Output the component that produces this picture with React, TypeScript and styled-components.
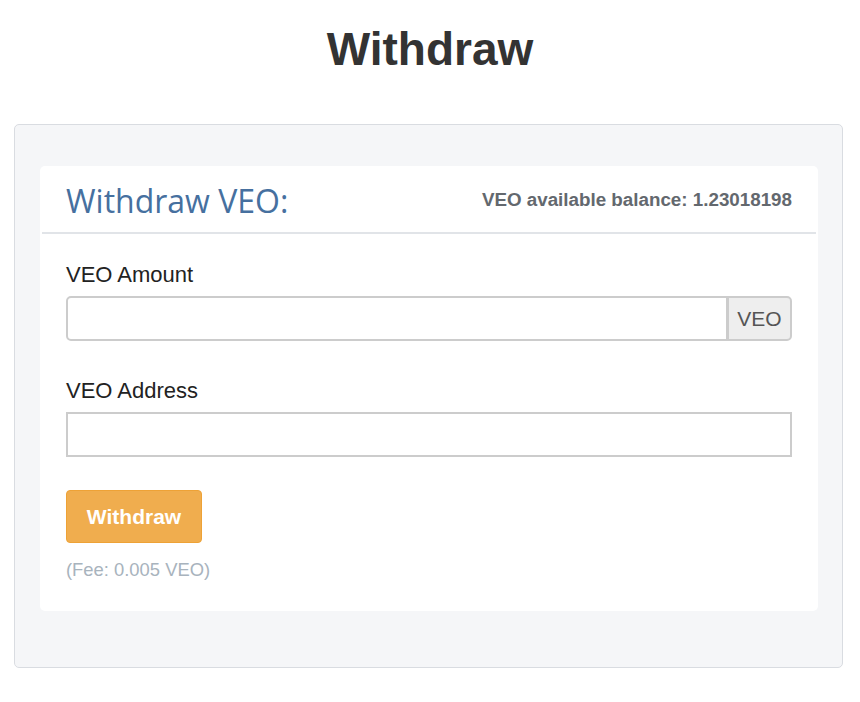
import React from "react";
import styled, { createGlobalStyle } from "styled-components";

const GlobalStyle = createGlobalStyle`
	body {
		margin: 0;
		background: #ffffff;
		font-family: "Liberation Sans", Arial, sans-serif;
		color: #222222;
	}
`;

const Page = styled.div`
	width: 860px;
	padding-bottom: 30px;
`;

const PageTitle = styled.h1`
	margin: 0;
	padding: 21px 0 0;
	height: 124px;
	box-sizing: border-box;
	text-align: center;
	font-size: 46px;
	line-height: 56px;
	font-weight: 700;
	color: #333333;
`;

const Panel = styled.div`
	margin: 0 17px 0 14px;
	padding: 41px 24px 56px 25px;
	background: #f5f6f8;
	border: 1px solid #d9dce1;
	border-radius: 5px;
`;

const Card = styled.div`
	background: #ffffff;
	border-radius: 5px;
`;

const CardHeader = styled.div`
	display: flex;
	align-items: center;
	justify-content: space-between;
	height: 66px;
	padding: 0 26px;
	margin: 0 2px;
	border-bottom: 2px solid #e1e4e8;
`;

const CardTitle = styled.h2`
	margin: 2px 0 0 -2px;
	font-family: "Open Sans", sans-serif;
	font-size: 32px;
	font-weight: 400;
	color: #46709f;
`;

const Balance = styled.div`
	margin: 2px -2px 0 0;
	font-size: 18.8px;
	font-weight: 700;
	color: #63686e;
`;

const CardBody = styled.div`
	padding: 24px 26px 29px;
`;

const Field = styled.div<{ $gap?: number }>`
	margin-bottom: ${(p) => p.$gap ?? 33}px;
`;

const Label = styled.label`
	display: block;
	padding-top: 2px;
	margin-bottom: 6px;
	font-size: 22px;
	line-height: 30px;
	color: #222222;
`;

const InputGroup = styled.div`
	display: flex;
	height: 45px;
`;

const TextInput = styled.input<{ $square?: boolean; $joined?: boolean }>`
	flex: 1;
	min-width: 0;
	box-sizing: border-box;
	height: 45px;
	margin: 0;
	padding: 0 12px;
	border: 2px solid #cccccc;
	border-radius: ${(p) => (p.$square ? "0" : p.$joined ? "5px 0 0 5px" : "5px")};
	background: #ffffff;
	font-size: 20px;
	outline: none;
`;

const Addon = styled.span`
	display: flex;
	align-items: center;
	justify-content: center;
	box-sizing: border-box;
	width: 64px;
	height: 45px;
	border: 2px solid #cccccc;
	border-left: 1px solid #cccccc;
	border-radius: 0 5px 5px 0;
	background: #eeeeee;
	font-size: 21px;
	color: #555555;
`;

const WithdrawButton = styled.button`
	display: block;
	box-sizing: border-box;
	width: 136px;
	height: 53px;
	padding: 0;
	border: 1px solid #eea236;
	border-radius: 4px;
	background: #f0ad4e;
	color: #ffffff;
	font-family: "Liberation Sans", Arial, sans-serif;
	font-size: 21px;
	font-weight: 700;
	cursor: pointer;
`;

const Fee = styled.div`
	margin-top: 15px;
	font-size: 18.4px;
	line-height: 24px;
	color: #a8b3bd;
`;

const App: React.FC = () => {
	return (
		<Page>
			<GlobalStyle />
			<PageTitle>Withdraw</PageTitle>
			<Panel>
				<Card>
					<CardHeader>
						<CardTitle>Withdraw VEO:</CardTitle>
						<Balance>VEO available balance: 1.23018198</Balance>
					</CardHeader>
					<CardBody>
						<Field>
							<Label>VEO Amount</Label>
							<InputGroup>
								<TextInput $joined />
								<Addon>VEO</Addon>
							</InputGroup>
						</Field>
						<Field>
							<Label>VEO Address</Label>
							<TextInput $square style={{ width: "100%" }} />
						</Field>
						<WithdrawButton>Withdraw</WithdrawButton>
						<Fee>(Fee: 0.005 VEO)</Fee>
					</CardBody>
				</Card>
			</Panel>
		</Page>
	);
};

export default App;
